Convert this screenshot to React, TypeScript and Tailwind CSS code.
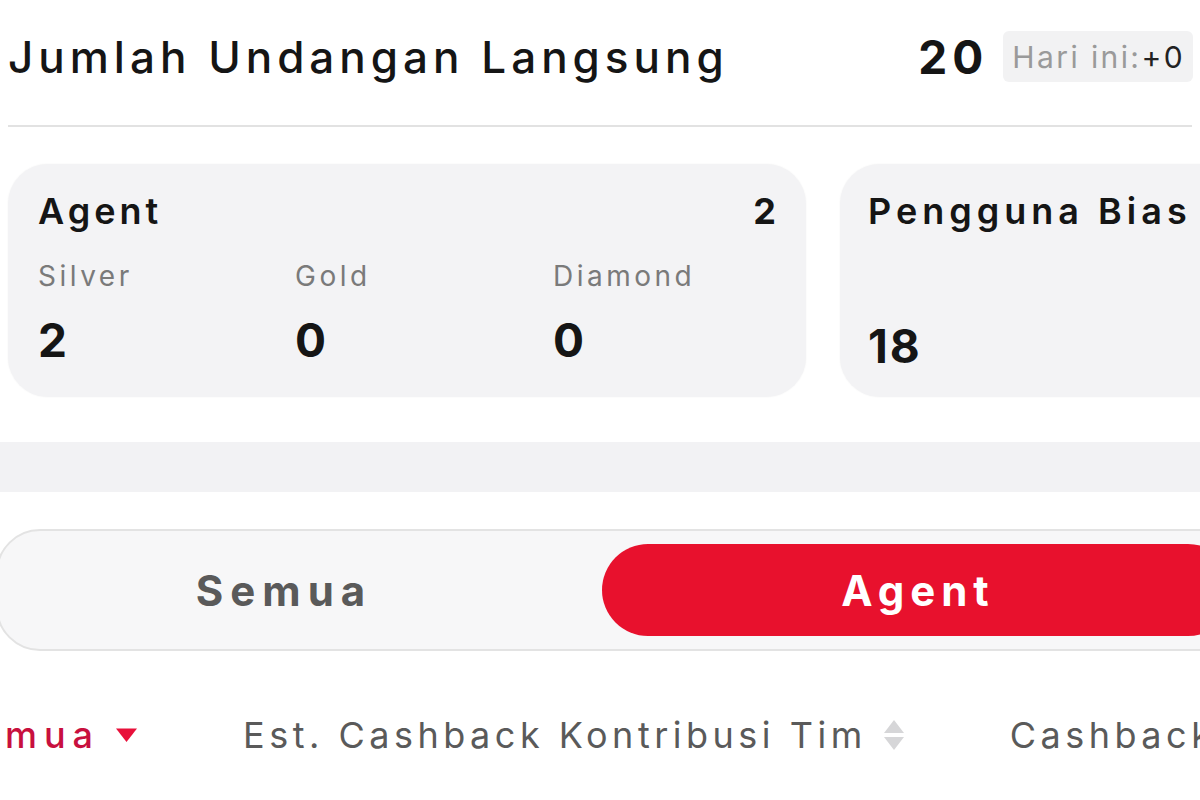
import { useState } from 'react';

type Tab = 'semua' | 'agent';

function SortIcon() {
  return (
    <svg width="26" height="34" viewBox="0 0 26 34" className="ml-[14px] shrink-0">
      <path d="M13 2 L23 15 L3 15 Z" fill="#d6d6d8" />
      <path d="M13 32 L23 19 L3 19 Z" fill="#d6d6d8" />
    </svg>
  );
}

function Caret() {
  return (
    <svg width="23" height="16" viewBox="0 0 23 16" className="ml-[15px] shrink-0">
      <path d="M1 1.5 L22 1.5 L11.5 15 Z" fill="#e8103a" />
    </svg>
  );
}

const stats = [
  { label: 'Silver', value: '2' },
  { label: 'Gold', value: '0' },
  { label: 'Diamond', value: '0' },
];

export default function App() {
  const [tab, setTab] = useState<Tab>('agent');

  return (
    <div className="w-[1200px] h-[800px] overflow-hidden bg-white text-[#151515] font-['Inter',sans-serif]">
      {/* HEADER */}
      <div className="flex items-center justify-between pl-2 pr-[7px] pt-[31px]">
        <h1 className="whitespace-nowrap text-[44px] font-medium leading-none tracking-[5px]">Jumlah Undangan Langsung</h1>
        <div className="flex items-center">
          <span className="text-[46px] font-bold leading-none tracking-[5px]">20</span>
          <span className="ml-[15px] flex h-[51px] items-center whitespace-nowrap rounded-md bg-[#f2f2f3] pl-[9px] pr-[8px] text-[30px] leading-none tracking-[2.4px]">
            <span className="text-[#9a9a9a]">Hari ini:</span>
            <span className="text-[#222]">+0</span>
          </span>
        </div>
      </div>

      <div className="mx-2 mt-[43px] h-[2px] bg-[#e2e2e2]" />

      {/* STATS CARDS */}
      <div className="mt-[37px] flex gap-[34px] pl-2">
        <div className="h-[233px] w-[798px] shrink-0 rounded-[40px] bg-[#f3f3f5] px-[30px] pt-[29px] shadow-[0_0_2px_rgba(0,0,0,0.06)]">
          <div className="flex items-center justify-between">
            <span className="text-[36px] font-semibold leading-none tracking-[4px]">Agent</span>
            <span className="text-[36px] font-bold leading-none">2</span>
          </div>
          <div className="mt-[33px] grid grid-cols-[257px_258px_1fr]">
            {stats.map((s) => (
              <div key={s.label}>
                <div className="text-[28px] leading-none tracking-[3.5px] text-[#7a7a7a]">{s.label}</div>
                <div className="mt-[27px] text-[46px] font-bold leading-none">{s.value}</div>
              </div>
            ))}
          </div>
        </div>
        <div className="h-[233px] w-[400px] shrink-0 rounded-[40px] bg-[#f3f3f5] px-[28px] pt-[29px] shadow-[0_0_2px_rgba(0,0,0,0.06)]">
          <div className="whitespace-nowrap text-[36px] font-semibold leading-none tracking-[5px]">Pengguna Bias</div>
          <div className="mt-[94px] text-[46px] font-bold leading-none tracking-[2px]">18</div>
        </div>
      </div>

      <div className="mt-[45px] h-[50px] bg-[#f2f2f4]" />

      {/* TABS */}
      <div className="-ml-[4px] mt-[37px] flex h-[122px] w-[1253px] items-center rounded-[44px] border-2 border-[#e3e3e3] bg-[#f7f7f8] p-[13px]">
        <button
          onClick={() => setTab('semua')}
          className={`flex h-full w-[591px] items-center justify-center rounded-full pr-[45px] text-[42px] font-bold tracking-[7px] ${tab === 'semua' ? 'bg-[#e8112d] text-white' : 'text-[#5a5a5a]'}`}
        >
          Semua
        </button>
        <button
          onClick={() => setTab('agent')}
          className={`flex h-full flex-1 items-center justify-center rounded-full text-[42px] font-bold tracking-[6px] ${tab === 'agent' ? 'bg-[#e8112d] text-white' : 'text-[#5a5a5a]'}`}
        >
          Agent
        </button>
      </div>

      {/* TABLE HEADER */}
      <div className="mt-[66px] flex items-center whitespace-nowrap text-[36px] leading-none tracking-[4.5px]">
        <div className="flex w-[138px] shrink-0 items-center justify-end">
          <span className="font-medium tracking-[7px] text-[#c8103e]">Semua</span>
          <Caret />
        </div>
        <div className="ml-[105px] flex shrink-0 items-center text-[#5a5a5a]">
          <span>Est. Cashback Kontribusi Tim</span>
          <SortIcon />
        </div>
        <span className="ml-[103px] shrink-0 text-[#5a5a5a]">Cashback</span>
      </div>
    </div>
  );
}
